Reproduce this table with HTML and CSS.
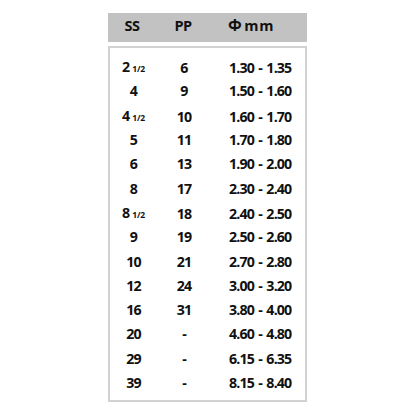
FILE: index.html
```html
<!DOCTYPE html>
<html>
<head>
<meta charset="utf-8">
<link rel="stylesheet" href="styles.css">
</head>
<body>
<div class="wrap">
  <div class="head">
    <div class="c1">SS</div>
    <div class="c2">PP</div>
    <div class="c3"><span class="phi">Φ</span> <span class="mm">mm</span></div>
  </div>
  <div class="box">
    <div class="row"><div class="c1">2<span class="frac">1/2</span></div><div class="c2">6</div><div class="c3">1.30 - 1.35</div></div>
    <div class="row"><div class="c1">4</div><div class="c2">9</div><div class="c3">1.50 - 1.60</div></div>
    <div class="row"><div class="c1">4<span class="frac">1/2</span></div><div class="c2">10</div><div class="c3">1.60 - 1.70</div></div>
    <div class="row"><div class="c1">5</div><div class="c2">11</div><div class="c3">1.70 - 1.80</div></div>
    <div class="row"><div class="c1">6</div><div class="c2">13</div><div class="c3">1.90 - 2.00</div></div>
    <div class="row"><div class="c1">8</div><div class="c2">17</div><div class="c3">2.30 - 2.40</div></div>
    <div class="row"><div class="c1">8<span class="frac">1/2</span></div><div class="c2">18</div><div class="c3">2.40 - 2.50</div></div>
    <div class="row"><div class="c1">9</div><div class="c2">19</div><div class="c3">2.50 - 2.60</div></div>
    <div class="row"><div class="c1">10</div><div class="c2">21</div><div class="c3">2.70 - 2.80</div></div>
    <div class="row"><div class="c1">12</div><div class="c2">24</div><div class="c3">3.00 - 3.20</div></div>
    <div class="row"><div class="c1">16</div><div class="c2">31</div><div class="c3">3.80 - 4.00</div></div>
    <div class="row"><div class="c1">20</div><div class="c2">-</div><div class="c3">4.60 - 4.80</div></div>
    <div class="row"><div class="c1">29</div><div class="c2">-</div><div class="c3">6.15 - 6.35</div></div>
    <div class="row"><div class="c1">39</div><div class="c2">-</div><div class="c3">8.15 - 8.40</div></div>
  </div>
</div>
</body>
</html>
```

FILE: styles.css
```css
html, body {
  margin: 0;
  padding: 0;
  background: #ffffff;
}
body {
  font-family: "Open Sans", "Liberation Sans", sans-serif;
  font-weight: 700;
  color: #111111;
}
.wrap {
  width: 199px;
  padding: 13px 0 0 108px;
}
.head {
  display: grid;
  grid-template-columns: 48px 54px 1fr;
  align-items: center;
  height: 29px;
  background: #c2c2c2;
  font-size: 14.5px;
  letter-spacing: -0.6px;
  line-height: 24px;
  padding-bottom: 4px;
  box-sizing: border-box;
}
.phi {
  font-size: 16px;
}
.mm {
  letter-spacing: 0.6px;
}
.box {
  margin-top: 4px;
  border: 2px solid #d2d2d2;
  height: 356px;
  box-sizing: border-box;
  padding-top: 7px;
}
.row {
  display: grid;
  grid-template-columns: 47px 54px 1fr;
  align-items: center;
  height: 24.3px;
  font-size: 14.2px;
  letter-spacing: -0.85px;
  word-spacing: 1.5px;
  line-height: 24px;
}
.c1, .c2 {
  text-align: center;
}
.c3 {
  padding-left: 18px;
}
.frac {
  font-size: 8.5px;
  letter-spacing: -0.2px;
  margin-left: 3px;
}
```
